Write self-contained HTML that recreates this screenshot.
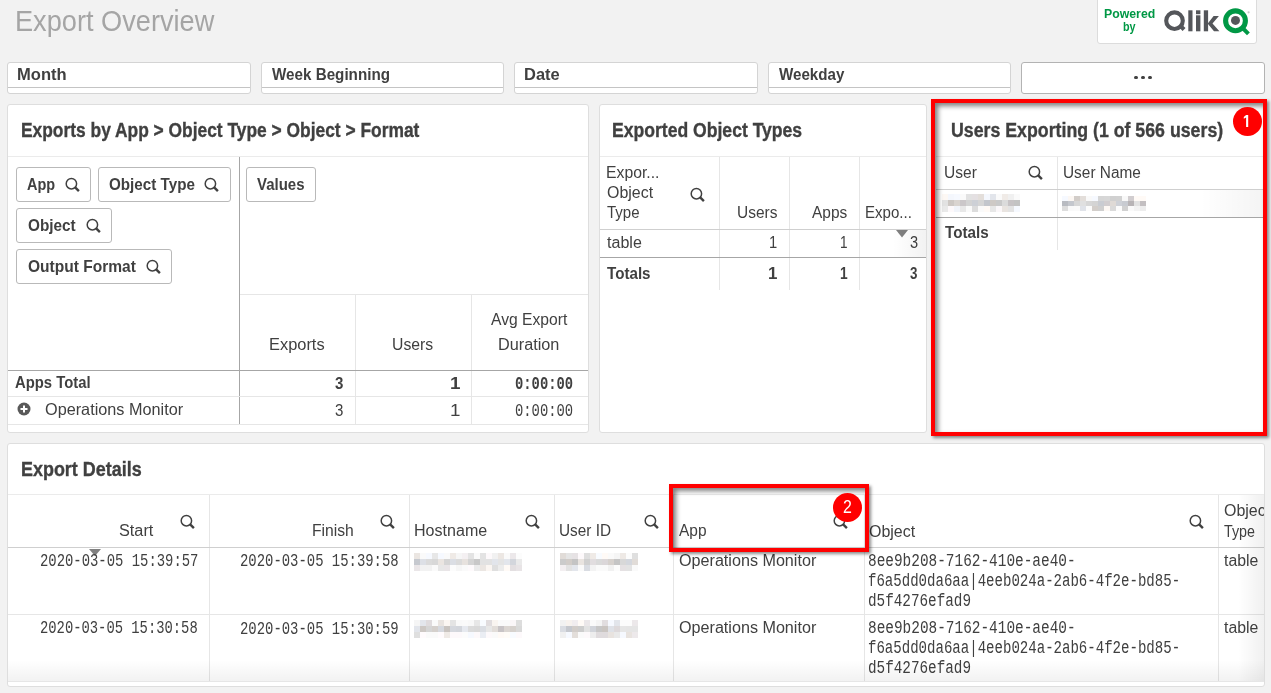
<!DOCTYPE html><html><head><meta charset="utf-8"><style>html,body{margin:0;padding:0}body{width:1271px;height:693px;position:relative;overflow:hidden;background:#f2f2f2;font-family:"Liberation Sans",sans-serif}</style></head><body>
<div style="position:absolute;left:14.73px;top:2px;font:400 29.07px/38px 'Liberation Sans';color:#a5a5a5;white-space:nowrap;transform-origin:left top;transform:scaleX(0.9350);">Export Overview</div>
<div style="position:absolute;left:1097px;top:-4px;width:160px;height:48px;background:#fff;border:1px solid #dcdcdc;border-radius:3px;box-sizing:border-box"></div>
<div style="position:absolute;left:1104.00px;top:5px;font:700 13.52px/18px 'Liberation Sans';color:#009845;white-space:nowrap;transform-origin:left top;transform:scaleX(0.9095);">Powered</div>
<div style="position:absolute;left:1123.00px;top:18px;font:700 13.52px/18px 'Liberation Sans';color:#009845;white-space:nowrap;transform-origin:left top;transform:scaleX(0.7997);">by</div>
<svg style="position:absolute;left:1160px;top:0px" width="100" height="40" viewBox="1160 0 100 40"><circle cx="1174.5" cy="20.7" r="8.3" fill="none" stroke="#54565a" stroke-width="4.1"/><path d="M1178.2 26.6l2.9-2.9 4.4 4.4-2.9 2.9z" fill="#54565a"/><rect x="1188.3" y="10.3" width="4.2" height="21" fill="#54565a"/><rect x="1196" y="10.3" width="4.4" height="3.9" fill="#54565a"/><rect x="1196" y="15.3" width="4.4" height="16" fill="#54565a"/><rect x="1203.8" y="10.3" width="4.3" height="21" fill="#54565a"/><path d="M1208 23.2l5.6-7.2h5.3l-6.4 7.4 6.9 7.9h-5.4l-6-7.2z" fill="#54565a"/><circle cx="1235.5" cy="20.8" r="9.9" fill="none" stroke="#009845" stroke-width="5.1"/><circle cx="1235.5" cy="20.4" r="4.5" fill="#54565a"/><path d="M1241.2 29.4l2.8-2.8 5.8 5.8-2.8 2.8z" fill="#009845"/><circle cx="1248.6" cy="12.3" r="1.1" fill="#c8c8c8"/></svg>
<div style="position:absolute;left:7px;top:62px;width:244px;height:32px;background:#fff;border:1px solid #d4d4d4;border-radius:3px;box-sizing:border-box"></div>
<div style="position:absolute;left:8px;top:87px;width:242px;height:1px;background:#c4c4c4"></div>
<div style="position:absolute;left:17.01px;top:64px;font:700 16.72px/22px 'Liberation Sans';color:#404040;white-space:nowrap;transform-origin:left top;transform:scaleX(0.9901);">Month</div>
<div style="position:absolute;left:261px;top:62px;width:243px;height:32px;background:#fff;border:1px solid #d4d4d4;border-radius:3px;box-sizing:border-box"></div>
<div style="position:absolute;left:262px;top:87px;width:241px;height:1px;background:#c4c4c4"></div>
<div style="position:absolute;left:272.00px;top:64px;font:700 16.72px/22px 'Liberation Sans';color:#404040;white-space:nowrap;transform-origin:left top;transform:scaleX(0.9102);">Week Beginning</div>
<div style="position:absolute;left:514px;top:62px;width:244px;height:32px;background:#fff;border:1px solid #d4d4d4;border-radius:3px;box-sizing:border-box"></div>
<div style="position:absolute;left:515px;top:87px;width:242px;height:1px;background:#c4c4c4"></div>
<div style="position:absolute;left:524.01px;top:64px;font:700 16.72px/22px 'Liberation Sans';color:#404040;white-space:nowrap;transform-origin:left top;transform:scaleX(0.9853);">Date</div>
<div style="position:absolute;left:768px;top:62px;width:243px;height:32px;background:#fff;border:1px solid #d4d4d4;border-radius:3px;box-sizing:border-box"></div>
<div style="position:absolute;left:769px;top:87px;width:241px;height:1px;background:#c4c4c4"></div>
<div style="position:absolute;left:779.00px;top:64px;font:700 16.72px/22px 'Liberation Sans';color:#404040;white-space:nowrap;transform-origin:left top;transform:scaleX(0.9063);">Weekday</div>
<div style="position:absolute;left:1021px;top:62px;width:244px;height:32px;background:#fff;border:1px solid #b3b3b3;border-radius:3px;box-sizing:border-box"></div>
<div style="position:absolute;left:1134.2px;top:75.9px;width:3.6px;height:3.6px;background:#404040;border-radius:50%"></div>
<div style="position:absolute;left:1141.2px;top:75.9px;width:3.6px;height:3.6px;background:#404040;border-radius:50%"></div>
<div style="position:absolute;left:1148.2px;top:75.9px;width:3.6px;height:3.6px;background:#404040;border-radius:50%"></div>
<div style="position:absolute;left:7px;top:104px;width:582px;height:329px;background:#fff;border:1px solid #dedede;border-radius:3px;box-sizing:border-box;"></div>
<div style="position:absolute;left:599px;top:104px;width:328px;height:329px;background:#fff;border:1px solid #dedede;border-radius:3px;box-sizing:border-box;"></div>
<div style="position:absolute;left:7px;top:443px;width:1258px;height:244px;background:#fff;border:1px solid #dedede;border-radius:3px;box-sizing:border-box;"></div>
<div style="position:absolute;left:20.85px;top:117px;font:700 20.35px/27px 'Liberation Sans';color:#404040;white-space:nowrap;transform-origin:left top;transform:scaleX(0.8542);-webkit-text-stroke:0.35px #404040">Exports by App &gt; Object Type &gt; Object &gt; Format</div>
<div style="position:absolute;left:8px;top:156px;width:580px;height:1px;background:#ebebeb"></div>
<div style="position:absolute;left:239px;top:157px;width:1px;height:268px;background:#a6a6a6"></div>
<div style="position:absolute;left:240px;top:294px;width:348px;height:1px;background:#e6e6e6"></div>
<div style="position:absolute;left:355px;top:295px;width:1px;height:130px;background:#e6e6e6"></div>
<div style="position:absolute;left:471px;top:295px;width:1px;height:130px;background:#e6e6e6"></div>
<div style="position:absolute;left:8px;top:370px;width:580px;height:1px;background:#a6a6a6"></div>
<div style="position:absolute;left:8px;top:396px;width:580px;height:1px;background:#e6e6e6"></div>
<div style="position:absolute;left:8px;top:424px;width:580px;height:1px;background:#e6e6e6"></div>
<div style="position:absolute;left:16px;top:167px;width:75px;height:35px;border:1px solid #b9b9b9;border-radius:3px;box-sizing:border-box"></div>
<div style="position:absolute;left:27.30px;top:173px;font:700 17.15px/23px 'Liberation Sans';color:#404040;white-space:nowrap;transform-origin:left top;transform:scaleX(0.8433);">App</div>
<svg style="position:absolute;left:64px;top:175.5px" width="17" height="17" viewBox="0 0 17 17"><circle cx="7.4" cy="7.7" r="5.2" fill="none" stroke="#404040" stroke-width="1.5"/><line x1="10.9" y1="11.2" x2="14.9" y2="15.2" stroke="#404040" stroke-width="2.4"/></svg>
<div style="position:absolute;left:98px;top:167px;width:133px;height:35px;border:1px solid #b9b9b9;border-radius:3px;box-sizing:border-box"></div>
<div style="position:absolute;left:109.40px;top:173px;font:700 17.15px/23px 'Liberation Sans';color:#404040;white-space:nowrap;transform-origin:left top;transform:scaleX(0.8868);">Object Type</div>
<svg style="position:absolute;left:203px;top:175.5px" width="17" height="17" viewBox="0 0 17 17"><circle cx="7.4" cy="7.7" r="5.2" fill="none" stroke="#404040" stroke-width="1.5"/><line x1="10.9" y1="11.2" x2="14.9" y2="15.2" stroke="#404040" stroke-width="2.4"/></svg>
<div style="position:absolute;left:16px;top:208px;width:96px;height:35px;border:1px solid #b9b9b9;border-radius:3px;box-sizing:border-box"></div>
<div style="position:absolute;left:27.80px;top:214px;font:700 17.15px/23px 'Liberation Sans';color:#404040;white-space:nowrap;transform-origin:left top;transform:scaleX(0.8931);">Object</div>
<svg style="position:absolute;left:84.5px;top:216.5px" width="17" height="17" viewBox="0 0 17 17"><circle cx="7.4" cy="7.7" r="5.2" fill="none" stroke="#404040" stroke-width="1.5"/><line x1="10.9" y1="11.2" x2="14.9" y2="15.2" stroke="#404040" stroke-width="2.4"/></svg>
<div style="position:absolute;left:16px;top:249px;width:156px;height:35px;border:1px solid #b9b9b9;border-radius:3px;box-sizing:border-box"></div>
<div style="position:absolute;left:27.80px;top:255px;font:700 17.15px/23px 'Liberation Sans';color:#404040;white-space:nowrap;transform-origin:left top;transform:scaleX(0.9069);">Output Format</div>
<svg style="position:absolute;left:145px;top:257.5px" width="17" height="17" viewBox="0 0 17 17"><circle cx="7.4" cy="7.7" r="5.2" fill="none" stroke="#404040" stroke-width="1.5"/><line x1="10.9" y1="11.2" x2="14.9" y2="15.2" stroke="#404040" stroke-width="2.4"/></svg>
<div style="position:absolute;left:246px;top:167px;width:70px;height:35px;border:1px solid #b9b9b9;border-radius:3px;box-sizing:border-box"></div>
<div style="position:absolute;left:257.00px;top:173px;font:700 17.15px/23px 'Liberation Sans';color:#404040;white-space:nowrap;transform-origin:left top;transform:scaleX(0.8739);">Values</div>
<div style="position:absolute;left:269.20px;top:333px;font:400 16.42px/22px 'Liberation Sans';color:#404040;white-space:nowrap;transform-origin:left top;transform:scaleX(0.9997);">Exports</div>
<div style="position:absolute;left:392.04px;top:333px;font:400 16.42px/22px 'Liberation Sans';color:#404040;white-space:nowrap;transform-origin:left top;transform:scaleX(0.9606);">Users</div>
<div style="position:absolute;left:491.00px;top:308px;font:400 16.42px/22px 'Liberation Sans';color:#404040;white-space:nowrap;transform-origin:left top;transform:scaleX(0.9541);">Avg Export</div>
<div style="position:absolute;left:497.71px;top:333px;font:400 16.42px/22px 'Liberation Sans';color:#404040;white-space:nowrap;transform-origin:left top;transform:scaleX(0.9903);">Duration</div>
<div style="position:absolute;left:15.00px;top:372px;font:700 16.72px/22px 'Liberation Sans';color:#404040;white-space:nowrap;transform-origin:left top;transform:scaleX(0.8885);">Apps Total</div>
<div style="position:absolute;left:335.40px;top:373px;font:700 16.72px/22px 'Liberation Sans';color:#404040;white-space:nowrap;transform-origin:left top;transform:scaleX(0.9000);">3</div>
<div style="position:absolute;left:449.88px;top:373px;font:700 16.72px/22px 'Liberation Sans';color:#404040;white-space:nowrap;transform-origin:left top;transform:scaleX(1.1250);">1</div>
<div style="position:absolute;left:515.21px;top:373px;font:700 17.46px/23px 'Liberation Mono';color:#404040;white-space:nowrap;transform-origin:left top;transform:scaleX(0.7940);">0:00:00</div>
<svg style="position:absolute;left:17px;top:402px" width="14" height="14" viewBox="0 0 14 14"><circle cx="7" cy="7" r="6.5" fill="#595959"/><path d="M7 3.5v7M3.5 7h7" stroke="#fff" stroke-width="2"/></svg>
<div style="position:absolute;left:45.00px;top:399px;font:400 16.72px/22px 'Liberation Sans';color:#404040;white-space:nowrap;transform-origin:left top;transform:scaleX(0.9721);">Operations Monitor</div>
<div style="position:absolute;left:335.40px;top:400px;font:400 16.72px/22px 'Liberation Sans';color:#404040;white-space:nowrap;transform-origin:left top;transform:scaleX(0.9000);">3</div>
<div style="position:absolute;left:449.88px;top:400px;font:400 16.72px/22px 'Liberation Sans';color:#404040;white-space:nowrap;transform-origin:left top;transform:scaleX(1.1250);">1</div>
<div style="position:absolute;left:515.21px;top:400px;font:400 17.46px/23px 'Liberation Mono';color:#404040;white-space:nowrap;transform-origin:left top;transform:scaleX(0.7940);">0:00:00</div>
<div style="position:absolute;left:612.14px;top:117px;font:700 20.35px/27px 'Liberation Sans';color:#404040;white-space:nowrap;transform-origin:left top;transform:scaleX(0.8640);-webkit-text-stroke:0.35px #404040">Exported Object Types</div>
<div style="position:absolute;left:600px;top:156px;width:326px;height:1px;background:#ebebeb"></div>
<div style="position:absolute;left:719px;top:157px;width:1px;height:133px;background:#e6e6e6"></div>
<div style="position:absolute;left:789px;top:157px;width:1px;height:133px;background:#e6e6e6"></div>
<div style="position:absolute;left:859px;top:157px;width:1px;height:133px;background:#e6e6e6"></div>
<div style="position:absolute;left:600px;top:229px;width:326px;height:1px;background:#cfcfcf"></div>
<div style="position:absolute;left:600px;top:257px;width:326px;height:1px;background:#a6a6a6"></div>
<div style="position:absolute;left:606.04px;top:161px;font:400 16.42px/22px 'Liberation Sans';color:#404040;white-space:nowrap;transform-origin:left top;transform:scaleX(0.9599);">Expor...</div>
<div style="position:absolute;left:607.00px;top:181px;font:400 16.42px/22px 'Liberation Sans';color:#404040;white-space:nowrap;transform-origin:left top;transform:scaleX(0.9716);">Object</div>
<div style="position:absolute;left:607.00px;top:201px;font:400 16.42px/22px 'Liberation Sans';color:#404040;white-space:nowrap;transform-origin:left top;transform:scaleX(0.9141);">Type</div>
<svg style="position:absolute;left:688.5px;top:186px" width="17" height="17" viewBox="0 0 17 17"><circle cx="7.4" cy="7.7" r="5.2" fill="none" stroke="#404040" stroke-width="1.5"/><line x1="10.9" y1="11.2" x2="14.9" y2="15.2" stroke="#404040" stroke-width="2.4"/></svg>
<div style="position:absolute;left:736.76px;top:201px;font:400 16.42px/22px 'Liberation Sans';color:#404040;white-space:nowrap;transform-origin:left top;transform:scaleX(0.9438);">Users</div>
<div style="position:absolute;left:812.00px;top:201px;font:400 16.42px/22px 'Liberation Sans';color:#404040;white-space:nowrap;transform-origin:left top;transform:scaleX(0.9411);">Apps</div>
<div style="position:absolute;left:865.08px;top:201px;font:400 16.42px/22px 'Liberation Sans';color:#404040;white-space:nowrap;transform-origin:left top;transform:scaleX(0.9170);">Expo...</div>
<svg style="position:absolute;left:895px;top:230px" width="14" height="8" viewBox="0 0 14 8"><path d="M1 0h12l-6 7.6z" fill="#808080"/></svg>
<div style="position:absolute;left:606.70px;top:231px;font:400 16.42px/22px 'Liberation Sans';color:#404040;white-space:nowrap;transform-origin:left top;transform:scaleX(0.9788);">table</div>
<div style="position:absolute;left:769.40px;top:231px;font:400 16.42px/22px 'Liberation Sans';color:#404040;white-space:nowrap;transform-origin:left top;transform:scaleX(0.9000);">1</div>
<div style="position:absolute;left:840.17px;top:231px;font:400 16.42px/22px 'Liberation Sans';color:#404040;white-space:nowrap;transform-origin:left top;transform:scaleX(0.8250);">1</div>
<div style="position:absolute;left:910.00px;top:231px;font:400 16.42px/22px 'Liberation Sans';color:#404040;white-space:nowrap;transform-origin:left top;transform:scaleX(0.8889);">3</div>
<div style="position:absolute;left:606.70px;top:263px;font:700 16.72px/22px 'Liberation Sans';color:#404040;white-space:nowrap;transform-origin:left top;transform:scaleX(0.9086);">Totals</div>
<div style="position:absolute;left:767.89px;top:263px;font:700 16.72px/22px 'Liberation Sans';color:#404040;white-space:nowrap;transform-origin:left top;transform:scaleX(1.0125);">1</div>
<div style="position:absolute;left:840.17px;top:263px;font:700 16.72px/22px 'Liberation Sans';color:#404040;white-space:nowrap;transform-origin:left top;transform:scaleX(0.8250);">1</div>
<div style="position:absolute;left:909.70px;top:263px;font:700 16.72px/22px 'Liberation Sans';color:#404040;white-space:nowrap;transform-origin:left top;transform:scaleX(0.8000);">3</div>
<div style="position:absolute;left:935px;top:103px;width:328px;height:329px;background:#fff"></div>
<div style="position:absolute;left:950.53px;top:117px;font:700 20.35px/27px 'Liberation Sans';color:#404040;white-space:nowrap;transform-origin:left top;transform:scaleX(0.8722);-webkit-text-stroke:0.35px #404040">Users Exporting (1 of 566 users)</div>
<div style="position:absolute;left:936px;top:156px;width:327px;height:1px;background:#ebebeb"></div>
<div style="position:absolute;left:943.55px;top:161px;font:400 16.42px/22px 'Liberation Sans';color:#404040;white-space:nowrap;transform-origin:left top;transform:scaleX(0.9480);">User</div>
<svg style="position:absolute;left:1027px;top:164px" width="17" height="17" viewBox="0 0 17 17"><circle cx="7.4" cy="7.7" r="5.2" fill="none" stroke="#404040" stroke-width="1.5"/><line x1="10.9" y1="11.2" x2="14.9" y2="15.2" stroke="#404040" stroke-width="2.4"/></svg>
<div style="position:absolute;left:1062.76px;top:161px;font:400 16.42px/22px 'Liberation Sans';color:#404040;white-space:nowrap;transform-origin:left top;transform:scaleX(0.9385);">User Name</div>
<div style="position:absolute;left:1057px;top:157px;width:1px;height:93px;background:#e6e6e6"></div>
<div style="position:absolute;left:936px;top:189px;width:327px;height:1px;background:#cfcfcf"></div>
<div style="position:absolute;left:936px;top:217px;width:327px;height:1px;background:#a6a6a6"></div>
<div style="position:absolute;left:944.50px;top:222px;font:700 16.72px/22px 'Liberation Sans';color:#404040;white-space:nowrap;transform-origin:left top;transform:scaleX(0.9107);">Totals</div>
<svg style="position:absolute;left:942px;top:194px;filter:blur(0.7px)" width="78" height="18" shape-rendering="crispEdges"><rect x="0" y="0" width="6" height="6" fill="rgb(253, 248, 244)"/><rect x="6" y="0" width="6" height="6" fill="rgb(244, 247, 253)"/><rect x="12" y="0" width="6" height="6" fill="rgb(246, 249, 255)"/><rect x="18" y="0" width="6" height="6" fill="rgb(250, 250, 250)"/><rect x="24" y="0" width="6" height="6" fill="rgb(226, 226, 226)"/><rect x="30" y="0" width="6" height="6" fill="rgb(228, 224, 226)"/><rect x="36" y="0" width="6" height="6" fill="rgb(227, 222, 218)"/><rect x="42" y="0" width="6" height="6" fill="rgb(244, 247, 253)"/><rect x="48" y="0" width="6" height="6" fill="rgb(226, 229, 235)"/><rect x="54" y="0" width="6" height="6" fill="rgb(250, 250, 250)"/><rect x="60" y="0" width="6" height="6" fill="rgb(240, 235, 231)"/><rect x="66" y="0" width="6" height="6" fill="rgb(240, 240, 240)"/><rect x="72" y="0" width="6" height="6" fill="rgb(250, 250, 250)"/><rect x="0" y="6" width="6" height="6" fill="rgb(226, 226, 226)"/><rect x="6" y="6" width="6" height="6" fill="rgb(205, 200, 196)"/><rect x="12" y="6" width="6" height="6" fill="rgb(217, 212, 208)"/><rect x="18" y="6" width="6" height="6" fill="rgb(203, 199, 201)"/><rect x="24" y="6" width="6" height="6" fill="rgb(211, 211, 211)"/><rect x="30" y="6" width="6" height="6" fill="rgb(205, 208, 214)"/><rect x="36" y="6" width="6" height="6" fill="rgb(213, 213, 213)"/><rect x="42" y="6" width="6" height="6" fill="rgb(195, 198, 204)"/><rect x="48" y="6" width="6" height="6" fill="rgb(206, 201, 197)"/><rect x="54" y="6" width="6" height="6" fill="rgb(201, 201, 201)"/><rect x="60" y="6" width="6" height="6" fill="rgb(219, 219, 219)"/><rect x="66" y="6" width="6" height="6" fill="rgb(199, 195, 197)"/><rect x="72" y="6" width="6" height="6" fill="rgb(195, 195, 195)"/><rect x="0" y="12" width="6" height="6" fill="rgb(233, 233, 233)"/><rect x="6" y="12" width="6" height="6" fill="rgb(253, 249, 251)"/><rect x="12" y="12" width="6" height="6" fill="rgb(241, 244, 250)"/><rect x="18" y="12" width="6" height="6" fill="rgb(232, 232, 232)"/><rect x="24" y="12" width="6" height="6" fill="rgb(250, 250, 250)"/><rect x="30" y="12" width="6" height="6" fill="rgb(220, 220, 220)"/><rect x="36" y="12" width="6" height="6" fill="rgb(250, 250, 250)"/><rect x="42" y="12" width="6" height="6" fill="rgb(255, 250, 246)"/><rect x="48" y="12" width="6" height="6" fill="rgb(231, 231, 231)"/><rect x="54" y="12" width="6" height="6" fill="rgb(251, 247, 249)"/><rect x="60" y="12" width="6" height="6" fill="rgb(233, 228, 224)"/><rect x="66" y="12" width="6" height="6" fill="rgb(227, 227, 227)"/><rect x="72" y="12" width="6" height="6" fill="rgb(246, 249, 255)"/></svg>
<svg style="position:absolute;left:1062px;top:196px;filter:blur(0.7px)" width="84" height="15" shape-rendering="crispEdges"><rect x="0" y="0" width="6" height="5" fill="rgb(246, 249, 255)"/><rect x="6" y="0" width="6" height="5" fill="rgb(252, 247, 243)"/><rect x="12" y="0" width="6" height="5" fill="rgb(210, 205, 201)"/><rect x="18" y="0" width="6" height="5" fill="rgb(227, 222, 218)"/><rect x="24" y="0" width="6" height="5" fill="rgb(249, 249, 249)"/><rect x="30" y="0" width="6" height="5" fill="rgb(246, 249, 255)"/><rect x="36" y="0" width="6" height="5" fill="rgb(214, 214, 214)"/><rect x="42" y="0" width="6" height="5" fill="rgb(215, 215, 215)"/><rect x="48" y="0" width="6" height="5" fill="rgb(208, 208, 208)"/><rect x="54" y="0" width="6" height="5" fill="rgb(209, 209, 209)"/><rect x="60" y="0" width="6" height="5" fill="rgb(248, 248, 248)"/><rect x="66" y="0" width="6" height="5" fill="rgb(209, 205, 207)"/><rect x="72" y="0" width="6" height="5" fill="rgb(255, 250, 246)"/><rect x="78" y="0" width="6" height="5" fill="rgb(255, 250, 246)"/><rect x="0" y="5" width="6" height="5" fill="rgb(184, 187, 193)"/><rect x="6" y="5" width="6" height="5" fill="rgb(196, 199, 205)"/><rect x="12" y="5" width="6" height="5" fill="rgb(215, 215, 215)"/><rect x="18" y="5" width="6" height="5" fill="rgb(224, 224, 224)"/><rect x="24" y="5" width="6" height="5" fill="rgb(215, 215, 215)"/><rect x="30" y="5" width="6" height="5" fill="rgb(212, 212, 212)"/><rect x="36" y="5" width="6" height="5" fill="rgb(201, 204, 210)"/><rect x="42" y="5" width="6" height="5" fill="rgb(209, 205, 207)"/><rect x="48" y="5" width="6" height="5" fill="rgb(223, 218, 214)"/><rect x="54" y="5" width="6" height="5" fill="rgb(206, 209, 215)"/><rect x="60" y="5" width="6" height="5" fill="rgb(200, 203, 209)"/><rect x="66" y="5" width="6" height="5" fill="rgb(184, 180, 182)"/><rect x="72" y="5" width="6" height="5" fill="rgb(226, 226, 226)"/><rect x="78" y="5" width="6" height="5" fill="rgb(195, 191, 193)"/><rect x="0" y="10" width="6" height="5" fill="rgb(221, 221, 221)"/><rect x="6" y="10" width="6" height="5" fill="rgb(249, 249, 249)"/><rect x="12" y="10" width="6" height="5" fill="rgb(250, 250, 250)"/><rect x="18" y="10" width="6" height="5" fill="rgb(224, 227, 233)"/><rect x="24" y="10" width="6" height="5" fill="rgb(252, 252, 252)"/><rect x="30" y="10" width="6" height="5" fill="rgb(211, 206, 202)"/><rect x="36" y="10" width="6" height="5" fill="rgb(207, 207, 207)"/><rect x="42" y="10" width="6" height="5" fill="rgb(253, 248, 244)"/><rect x="48" y="10" width="6" height="5" fill="rgb(218, 218, 218)"/><rect x="54" y="10" width="6" height="5" fill="rgb(252, 252, 252)"/><rect x="60" y="10" width="6" height="5" fill="rgb(209, 209, 209)"/><rect x="66" y="10" width="6" height="5" fill="rgb(250, 250, 250)"/><rect x="72" y="10" width="6" height="5" fill="rgb(243, 243, 243)"/><rect x="78" y="10" width="6" height="5" fill="rgb(237, 237, 237)"/></svg>
<div style="position:absolute;left:931px;top:99px;width:336px;height:337px;border:4px solid #ff0000;box-sizing:border-box;box-shadow:inset 3px 3px 5px rgba(0,0,0,.5),2px 2px 3px rgba(0,0,0,.45)"></div>
<div style="position:absolute;left:1233px;top:107px;width:29px;height:29px;border-radius:50%;background:#f00"></div>
<svg style="position:absolute;left:1240px;top:112px" width="12" height="18" viewBox="1240 112 12 18"><path d="M1246.1 115h2.1v12h-2.1v-9.4l-2.3 1.2v-1.9z" fill="#fff"/></svg>
<div style="position:absolute;left:20.82px;top:456px;font:700 20.35px/27px 'Liberation Sans';color:#404040;white-space:nowrap;transform-origin:left top;transform:scaleX(0.8821);-webkit-text-stroke:0.35px #404040">Export Details</div>
<div style="position:absolute;left:8px;top:494px;width:1256px;height:1px;background:#ebebeb"></div>
<div style="position:absolute;left:209px;top:495px;width:1px;height:186px;background:#e6e6e6"></div>
<div style="position:absolute;left:409px;top:495px;width:1px;height:186px;background:#e6e6e6"></div>
<div style="position:absolute;left:554px;top:495px;width:1px;height:186px;background:#e6e6e6"></div>
<div style="position:absolute;left:673px;top:495px;width:1px;height:186px;background:#e6e6e6"></div>
<div style="position:absolute;left:864px;top:495px;width:1px;height:186px;background:#e6e6e6"></div>
<div style="position:absolute;left:1218px;top:495px;width:1px;height:186px;background:#e6e6e6"></div>
<div style="position:absolute;left:8px;top:547px;width:1256px;height:1px;background:#cfcfcf"></div>
<div style="position:absolute;left:8px;top:614px;width:1256px;height:1px;background:#e6e6e6"></div>
<div style="position:absolute;left:8px;top:681px;width:1256px;height:1px;background:#e6e6e6"></div>
<div style="position:absolute;left:119.00px;top:519px;font:400 16.42px/22px 'Liberation Sans';color:#404040;white-space:nowrap;transform-origin:left top;transform:scaleX(0.9918);">Start</div>
<svg style="position:absolute;left:178.5px;top:513px" width="17" height="17" viewBox="0 0 17 17"><circle cx="7.4" cy="7.7" r="5.2" fill="none" stroke="#404040" stroke-width="1.5"/><line x1="10.9" y1="11.2" x2="14.9" y2="15.2" stroke="#404040" stroke-width="2.4"/></svg>
<div style="position:absolute;left:311.55px;top:519px;font:400 16.42px/22px 'Liberation Sans';color:#404040;white-space:nowrap;transform-origin:left top;transform:scaleX(0.9545);">Finish</div>
<svg style="position:absolute;left:379px;top:513px" width="17" height="17" viewBox="0 0 17 17"><circle cx="7.4" cy="7.7" r="5.2" fill="none" stroke="#404040" stroke-width="1.5"/><line x1="10.9" y1="11.2" x2="14.9" y2="15.2" stroke="#404040" stroke-width="2.4"/></svg>
<div style="position:absolute;left:414.22px;top:519px;font:400 16.42px/22px 'Liberation Sans';color:#404040;white-space:nowrap;transform-origin:left top;transform:scaleX(0.9790);">Hostname</div>
<svg style="position:absolute;left:524px;top:513px" width="17" height="17" viewBox="0 0 17 17"><circle cx="7.4" cy="7.7" r="5.2" fill="none" stroke="#404040" stroke-width="1.5"/><line x1="10.9" y1="11.2" x2="14.9" y2="15.2" stroke="#404040" stroke-width="2.4"/></svg>
<div style="position:absolute;left:559.36px;top:519px;font:400 16.42px/22px 'Liberation Sans';color:#404040;white-space:nowrap;transform-origin:left top;transform:scaleX(0.9351);">User ID</div>
<svg style="position:absolute;left:643px;top:513px" width="17" height="17" viewBox="0 0 17 17"><circle cx="7.4" cy="7.7" r="5.2" fill="none" stroke="#404040" stroke-width="1.5"/><line x1="10.9" y1="11.2" x2="14.9" y2="15.2" stroke="#404040" stroke-width="2.4"/></svg>
<div style="position:absolute;left:678.90px;top:519px;font:400 16.42px/22px 'Liberation Sans';color:#404040;white-space:nowrap;transform-origin:left top;transform:scaleX(0.9426);">App</div>
<svg style="position:absolute;left:832px;top:513px" width="17" height="17" viewBox="0 0 17 17"><circle cx="7.4" cy="7.7" r="5.2" fill="none" stroke="#404040" stroke-width="1.5"/><line x1="10.9" y1="11.2" x2="14.9" y2="15.2" stroke="#404040" stroke-width="2.4"/></svg>
<div style="position:absolute;left:869.00px;top:520px;font:400 16.42px/22px 'Liberation Sans';color:#404040;white-space:nowrap;transform-origin:left top;transform:scaleX(0.9737);">Object</div>
<svg style="position:absolute;left:1188px;top:512.5px" width="17" height="17" viewBox="0 0 17 17"><circle cx="7.4" cy="7.7" r="5.2" fill="none" stroke="#404040" stroke-width="1.5"/><line x1="10.9" y1="11.2" x2="14.9" y2="15.2" stroke="#404040" stroke-width="2.4"/></svg>
<div style="position:absolute;left:0;top:0;width:1264px;height:693px;overflow:hidden">
<div style="position:absolute;left:1224.20px;top:499px;font:400 16.42px/22px 'Liberation Sans';color:#404040;white-space:nowrap;transform-origin:left top;transform:scaleX(0.9737);">Object</div>
<div style="position:absolute;left:1224.20px;top:520px;font:400 16.42px/22px 'Liberation Sans';color:#404040;white-space:nowrap;transform-origin:left top;transform:scaleX(0.8690);">Type</div>
</div>
<svg style="position:absolute;left:88px;top:549px" width="14" height="8" viewBox="0 0 14 8"><path d="M1 0h12l-6 7z" fill="#808080"/></svg>
<div style="position:absolute;left:39.87px;top:549px;font:400 18.98px/25px 'Liberation Mono';color:#404040;white-space:nowrap;transform-origin:left top;transform:scaleX(0.7326);">2020-03-05 15:39:57</div>
<div style="position:absolute;left:239.67px;top:549px;font:400 18.98px/25px 'Liberation Mono';color:#404040;white-space:nowrap;transform-origin:left top;transform:scaleX(0.7334);">2020-03-05 15:39:58</div>
<div style="position:absolute;left:678.90px;top:549px;font:400 16.42px/22px 'Liberation Sans';color:#404040;white-space:nowrap;transform-origin:left top;transform:scaleX(0.9839);">Operations Monitor</div>
<div style="position:absolute;left:868.24px;top:549px;font:400 18.98px/25px 'Liberation Mono';color:#404040;white-space:nowrap;transform-origin:left top;transform:scaleX(0.7598);">8ee9b208-7162-410e-ae40-</div>
<div style="position:absolute;left:868.26px;top:569px;font:400 18.98px/25px 'Liberation Mono';color:#404040;white-space:nowrap;transform-origin:left top;transform:scaleX(0.7410);">f6a5dd0da6aa|4eeb024a-2ab6-4f2e-bd85-</div>
<div style="position:absolute;left:868.25px;top:589px;font:400 18.98px/25px 'Liberation Mono';color:#404040;white-space:nowrap;transform-origin:left top;transform:scaleX(0.7544);">d5f4276efad9</div>
<div style="position:absolute;left:1224.20px;top:549px;font:400 16.42px/22px 'Liberation Sans';color:#404040;white-space:nowrap;transform-origin:left top;transform:scaleX(0.9647);">table</div>
<svg style="position:absolute;left:414px;top:553px;filter:blur(0.7px)" width="108" height="18" shape-rendering="crispEdges"><rect x="0" y="0" width="6" height="6" fill="rgb(235, 230, 226)"/><rect x="6" y="0" width="6" height="6" fill="rgb(250, 250, 250)"/><rect x="12" y="0" width="6" height="6" fill="rgb(246, 249, 255)"/><rect x="18" y="0" width="6" height="6" fill="rgb(231, 231, 231)"/><rect x="24" y="0" width="6" height="6" fill="rgb(246, 249, 255)"/><rect x="30" y="0" width="6" height="6" fill="rgb(250, 250, 250)"/><rect x="36" y="0" width="6" height="6" fill="rgb(239, 234, 230)"/><rect x="42" y="0" width="6" height="6" fill="rgb(246, 246, 246)"/><rect x="48" y="0" width="6" height="6" fill="rgb(244, 240, 242)"/><rect x="54" y="0" width="6" height="6" fill="rgb(227, 227, 227)"/><rect x="60" y="0" width="6" height="6" fill="rgb(250, 250, 250)"/><rect x="66" y="0" width="6" height="6" fill="rgb(227, 227, 227)"/><rect x="72" y="0" width="6" height="6" fill="rgb(253, 249, 251)"/><rect x="78" y="0" width="6" height="6" fill="rgb(241, 241, 241)"/><rect x="84" y="0" width="6" height="6" fill="rgb(236, 231, 227)"/><rect x="90" y="0" width="6" height="6" fill="rgb(250, 250, 250)"/><rect x="96" y="0" width="6" height="6" fill="rgb(236, 232, 234)"/><rect x="102" y="0" width="6" height="6" fill="rgb(252, 252, 252)"/><rect x="0" y="6" width="6" height="6" fill="rgb(198, 201, 207)"/><rect x="6" y="6" width="6" height="6" fill="rgb(221, 224, 230)"/><rect x="12" y="6" width="6" height="6" fill="rgb(219, 219, 219)"/><rect x="18" y="6" width="6" height="6" fill="rgb(216, 216, 216)"/><rect x="24" y="6" width="6" height="6" fill="rgb(234, 229, 225)"/><rect x="30" y="6" width="6" height="6" fill="rgb(213, 213, 213)"/><rect x="36" y="6" width="6" height="6" fill="rgb(219, 222, 228)"/><rect x="42" y="6" width="6" height="6" fill="rgb(219, 219, 219)"/><rect x="48" y="6" width="6" height="6" fill="rgb(231, 226, 222)"/><rect x="54" y="6" width="6" height="6" fill="rgb(212, 212, 212)"/><rect x="60" y="6" width="6" height="6" fill="rgb(200, 200, 200)"/><rect x="66" y="6" width="6" height="6" fill="rgb(226, 226, 226)"/><rect x="72" y="6" width="6" height="6" fill="rgb(226, 226, 226)"/><rect x="78" y="6" width="6" height="6" fill="rgb(226, 229, 235)"/><rect x="84" y="6" width="6" height="6" fill="rgb(228, 228, 228)"/><rect x="90" y="6" width="6" height="6" fill="rgb(227, 230, 236)"/><rect x="96" y="6" width="6" height="6" fill="rgb(211, 214, 220)"/><rect x="102" y="6" width="6" height="6" fill="rgb(234, 234, 234)"/><rect x="0" y="12" width="6" height="6" fill="rgb(234, 230, 232)"/><rect x="6" y="12" width="6" height="6" fill="rgb(242, 242, 242)"/><rect x="12" y="12" width="6" height="6" fill="rgb(242, 242, 242)"/><rect x="18" y="12" width="6" height="6" fill="rgb(250, 250, 250)"/><rect x="24" y="12" width="6" height="6" fill="rgb(231, 231, 231)"/><rect x="30" y="12" width="6" height="6" fill="rgb(233, 229, 231)"/><rect x="36" y="12" width="6" height="6" fill="rgb(252, 252, 252)"/><rect x="42" y="12" width="6" height="6" fill="rgb(246, 246, 246)"/><rect x="48" y="12" width="6" height="6" fill="rgb(250, 250, 250)"/><rect x="54" y="12" width="6" height="6" fill="rgb(254, 250, 252)"/><rect x="60" y="12" width="6" height="6" fill="rgb(235, 235, 235)"/><rect x="66" y="12" width="6" height="6" fill="rgb(235, 230, 226)"/><rect x="72" y="12" width="6" height="6" fill="rgb(251, 246, 242)"/><rect x="78" y="12" width="6" height="6" fill="rgb(223, 223, 223)"/><rect x="84" y="12" width="6" height="6" fill="rgb(236, 236, 236)"/><rect x="90" y="12" width="6" height="6" fill="rgb(255, 250, 246)"/><rect x="96" y="12" width="6" height="6" fill="rgb(227, 223, 225)"/><rect x="102" y="12" width="6" height="6" fill="rgb(232, 228, 230)"/></svg>
<svg style="position:absolute;left:560px;top:553px;filter:blur(0.7px)" width="78" height="18" shape-rendering="crispEdges"><rect x="0" y="0" width="6" height="6" fill="rgb(225, 220, 216)"/><rect x="6" y="0" width="6" height="6" fill="rgb(229, 229, 229)"/><rect x="12" y="0" width="6" height="6" fill="rgb(230, 226, 228)"/><rect x="18" y="0" width="6" height="6" fill="rgb(253, 249, 251)"/><rect x="24" y="0" width="6" height="6" fill="rgb(222, 222, 222)"/><rect x="30" y="0" width="6" height="6" fill="rgb(239, 234, 230)"/><rect x="36" y="0" width="6" height="6" fill="rgb(248, 251, 255)"/><rect x="42" y="0" width="6" height="6" fill="rgb(255, 250, 246)"/><rect x="48" y="0" width="6" height="6" fill="rgb(250, 250, 250)"/><rect x="54" y="0" width="6" height="6" fill="rgb(245, 245, 245)"/><rect x="60" y="0" width="6" height="6" fill="rgb(238, 233, 229)"/><rect x="66" y="0" width="6" height="6" fill="rgb(252, 252, 252)"/><rect x="72" y="0" width="6" height="6" fill="rgb(223, 223, 223)"/><rect x="0" y="6" width="6" height="6" fill="rgb(203, 203, 203)"/><rect x="6" y="6" width="6" height="6" fill="rgb(209, 204, 200)"/><rect x="12" y="6" width="6" height="6" fill="rgb(196, 196, 196)"/><rect x="18" y="6" width="6" height="6" fill="rgb(233, 228, 224)"/><rect x="24" y="6" width="6" height="6" fill="rgb(208, 208, 208)"/><rect x="30" y="6" width="6" height="6" fill="rgb(225, 221, 223)"/><rect x="36" y="6" width="6" height="6" fill="rgb(218, 218, 218)"/><rect x="42" y="6" width="6" height="6" fill="rgb(219, 215, 217)"/><rect x="48" y="6" width="6" height="6" fill="rgb(214, 209, 205)"/><rect x="54" y="6" width="6" height="6" fill="rgb(197, 197, 197)"/><rect x="60" y="6" width="6" height="6" fill="rgb(216, 216, 216)"/><rect x="66" y="6" width="6" height="6" fill="rgb(212, 215, 221)"/><rect x="72" y="6" width="6" height="6" fill="rgb(225, 220, 216)"/><rect x="0" y="12" width="6" height="6" fill="rgb(243, 239, 241)"/><rect x="6" y="12" width="6" height="6" fill="rgb(226, 226, 226)"/><rect x="12" y="12" width="6" height="6" fill="rgb(227, 230, 236)"/><rect x="18" y="12" width="6" height="6" fill="rgb(250, 250, 250)"/><rect x="24" y="12" width="6" height="6" fill="rgb(217, 220, 226)"/><rect x="30" y="12" width="6" height="6" fill="rgb(243, 243, 243)"/><rect x="36" y="12" width="6" height="6" fill="rgb(250, 250, 250)"/><rect x="42" y="12" width="6" height="6" fill="rgb(250, 250, 250)"/><rect x="48" y="12" width="6" height="6" fill="rgb(241, 241, 241)"/><rect x="54" y="12" width="6" height="6" fill="rgb(252, 252, 252)"/><rect x="60" y="12" width="6" height="6" fill="rgb(229, 225, 227)"/><rect x="66" y="12" width="6" height="6" fill="rgb(227, 227, 227)"/><rect x="72" y="12" width="6" height="6" fill="rgb(250, 250, 250)"/></svg>
<div style="position:absolute;left:39.87px;top:616px;font:400 18.98px/25px 'Liberation Mono';color:#404040;white-space:nowrap;transform-origin:left top;transform:scaleX(0.7292);">2020-03-05 15:30:58</div>
<div style="position:absolute;left:239.67px;top:617px;font:400 18.98px/25px 'Liberation Mono';color:#404040;white-space:nowrap;transform-origin:left top;transform:scaleX(0.7334);">2020-03-05 15:30:59</div>
<div style="position:absolute;left:678.90px;top:616px;font:400 16.42px/22px 'Liberation Sans';color:#404040;white-space:nowrap;transform-origin:left top;transform:scaleX(0.9839);">Operations Monitor</div>
<div style="position:absolute;left:868.24px;top:616px;font:400 18.98px/25px 'Liberation Mono';color:#404040;white-space:nowrap;transform-origin:left top;transform:scaleX(0.7598);">8ee9b208-7162-410e-ae40-</div>
<div style="position:absolute;left:868.26px;top:636px;font:400 18.98px/25px 'Liberation Mono';color:#404040;white-space:nowrap;transform-origin:left top;transform:scaleX(0.7410);">f6a5dd0da6aa|4eeb024a-2ab6-4f2e-bd85-</div>
<div style="position:absolute;left:868.25px;top:656px;font:400 18.98px/25px 'Liberation Mono';color:#404040;white-space:nowrap;transform-origin:left top;transform:scaleX(0.7544);">d5f4276efad9</div>
<div style="position:absolute;left:1224.20px;top:616px;font:400 16.42px/22px 'Liberation Sans';color:#404040;white-space:nowrap;transform-origin:left top;transform:scaleX(0.9647);">table</div>
<svg style="position:absolute;left:414px;top:620px;filter:blur(0.7px)" width="108" height="18" shape-rendering="crispEdges"><rect x="0" y="0" width="6" height="6" fill="rgb(245, 245, 245)"/><rect x="6" y="0" width="6" height="6" fill="rgb(227, 230, 236)"/><rect x="12" y="0" width="6" height="6" fill="rgb(223, 219, 221)"/><rect x="18" y="0" width="6" height="6" fill="rgb(250, 250, 250)"/><rect x="24" y="0" width="6" height="6" fill="rgb(233, 228, 224)"/><rect x="30" y="0" width="6" height="6" fill="rgb(251, 246, 242)"/><rect x="36" y="0" width="6" height="6" fill="rgb(228, 228, 228)"/><rect x="42" y="0" width="6" height="6" fill="rgb(249, 249, 249)"/><rect x="48" y="0" width="6" height="6" fill="rgb(250, 250, 250)"/><rect x="54" y="0" width="6" height="6" fill="rgb(248, 248, 248)"/><rect x="60" y="0" width="6" height="6" fill="rgb(231, 231, 231)"/><rect x="66" y="0" width="6" height="6" fill="rgb(248, 251, 255)"/><rect x="72" y="0" width="6" height="6" fill="rgb(224, 220, 222)"/><rect x="78" y="0" width="6" height="6" fill="rgb(249, 244, 240)"/><rect x="84" y="0" width="6" height="6" fill="rgb(250, 250, 250)"/><rect x="90" y="0" width="6" height="6" fill="rgb(250, 250, 250)"/><rect x="96" y="0" width="6" height="6" fill="rgb(250, 246, 248)"/><rect x="102" y="0" width="6" height="6" fill="rgb(221, 221, 221)"/><rect x="0" y="6" width="6" height="6" fill="rgb(226, 229, 235)"/><rect x="6" y="6" width="6" height="6" fill="rgb(205, 200, 196)"/><rect x="12" y="6" width="6" height="6" fill="rgb(213, 213, 213)"/><rect x="18" y="6" width="6" height="6" fill="rgb(213, 208, 204)"/><rect x="24" y="6" width="6" height="6" fill="rgb(214, 217, 223)"/><rect x="30" y="6" width="6" height="6" fill="rgb(201, 196, 192)"/><rect x="36" y="6" width="6" height="6" fill="rgb(213, 216, 222)"/><rect x="42" y="6" width="6" height="6" fill="rgb(211, 214, 220)"/><rect x="48" y="6" width="6" height="6" fill="rgb(230, 233, 239)"/><rect x="54" y="6" width="6" height="6" fill="rgb(219, 219, 219)"/><rect x="60" y="6" width="6" height="6" fill="rgb(217, 217, 217)"/><rect x="66" y="6" width="6" height="6" fill="rgb(218, 221, 227)"/><rect x="72" y="6" width="6" height="6" fill="rgb(231, 231, 231)"/><rect x="78" y="6" width="6" height="6" fill="rgb(226, 221, 217)"/><rect x="84" y="6" width="6" height="6" fill="rgb(200, 196, 198)"/><rect x="90" y="6" width="6" height="6" fill="rgb(219, 214, 210)"/><rect x="96" y="6" width="6" height="6" fill="rgb(214, 209, 205)"/><rect x="102" y="6" width="6" height="6" fill="rgb(217, 217, 217)"/><rect x="0" y="12" width="6" height="6" fill="rgb(223, 223, 223)"/><rect x="6" y="12" width="6" height="6" fill="rgb(255, 251, 253)"/><rect x="12" y="12" width="6" height="6" fill="rgb(250, 250, 250)"/><rect x="18" y="12" width="6" height="6" fill="rgb(250, 250, 250)"/><rect x="24" y="12" width="6" height="6" fill="rgb(255, 251, 253)"/><rect x="30" y="12" width="6" height="6" fill="rgb(239, 234, 230)"/><rect x="36" y="12" width="6" height="6" fill="rgb(253, 249, 251)"/><rect x="42" y="12" width="6" height="6" fill="rgb(253, 249, 251)"/><rect x="48" y="12" width="6" height="6" fill="rgb(252, 252, 252)"/><rect x="54" y="12" width="6" height="6" fill="rgb(246, 249, 255)"/><rect x="60" y="12" width="6" height="6" fill="rgb(253, 249, 251)"/><rect x="66" y="12" width="6" height="6" fill="rgb(234, 237, 243)"/><rect x="72" y="12" width="6" height="6" fill="rgb(253, 249, 251)"/><rect x="78" y="12" width="6" height="6" fill="rgb(250, 250, 250)"/><rect x="84" y="12" width="6" height="6" fill="rgb(255, 250, 246)"/><rect x="90" y="12" width="6" height="6" fill="rgb(255, 252, 248)"/><rect x="96" y="12" width="6" height="6" fill="rgb(248, 251, 255)"/><rect x="102" y="12" width="6" height="6" fill="rgb(253, 249, 251)"/></svg>
<svg style="position:absolute;left:560px;top:620px;filter:blur(0.7px)" width="78" height="18" shape-rendering="crispEdges"><rect x="0" y="0" width="6" height="6" fill="rgb(242, 242, 242)"/><rect x="6" y="0" width="6" height="6" fill="rgb(247, 242, 238)"/><rect x="12" y="0" width="6" height="6" fill="rgb(241, 237, 239)"/><rect x="18" y="0" width="6" height="6" fill="rgb(255, 250, 246)"/><rect x="24" y="0" width="6" height="6" fill="rgb(235, 231, 233)"/><rect x="30" y="0" width="6" height="6" fill="rgb(250, 250, 250)"/><rect x="36" y="0" width="6" height="6" fill="rgb(244, 244, 244)"/><rect x="42" y="0" width="6" height="6" fill="rgb(225, 221, 223)"/><rect x="48" y="0" width="6" height="6" fill="rgb(246, 249, 255)"/><rect x="54" y="0" width="6" height="6" fill="rgb(226, 229, 235)"/><rect x="60" y="0" width="6" height="6" fill="rgb(252, 252, 252)"/><rect x="66" y="0" width="6" height="6" fill="rgb(252, 252, 252)"/><rect x="72" y="0" width="6" height="6" fill="rgb(236, 232, 234)"/><rect x="0" y="6" width="6" height="6" fill="rgb(217, 220, 226)"/><rect x="6" y="6" width="6" height="6" fill="rgb(197, 200, 206)"/><rect x="12" y="6" width="6" height="6" fill="rgb(210, 205, 201)"/><rect x="18" y="6" width="6" height="6" fill="rgb(205, 205, 205)"/><rect x="24" y="6" width="6" height="6" fill="rgb(226, 226, 226)"/><rect x="30" y="6" width="6" height="6" fill="rgb(209, 212, 218)"/><rect x="36" y="6" width="6" height="6" fill="rgb(199, 199, 199)"/><rect x="42" y="6" width="6" height="6" fill="rgb(202, 197, 193)"/><rect x="48" y="6" width="6" height="6" fill="rgb(222, 225, 231)"/><rect x="54" y="6" width="6" height="6" fill="rgb(221, 217, 219)"/><rect x="60" y="6" width="6" height="6" fill="rgb(230, 230, 230)"/><rect x="66" y="6" width="6" height="6" fill="rgb(229, 229, 229)"/><rect x="72" y="6" width="6" height="6" fill="rgb(229, 229, 229)"/><rect x="0" y="12" width="6" height="6" fill="rgb(240, 240, 240)"/><rect x="6" y="12" width="6" height="6" fill="rgb(246, 249, 255)"/><rect x="12" y="12" width="6" height="6" fill="rgb(227, 222, 218)"/><rect x="18" y="12" width="6" height="6" fill="rgb(250, 250, 250)"/><rect x="24" y="12" width="6" height="6" fill="rgb(253, 249, 251)"/><rect x="30" y="12" width="6" height="6" fill="rgb(237, 237, 237)"/><rect x="36" y="12" width="6" height="6" fill="rgb(223, 219, 221)"/><rect x="42" y="12" width="6" height="6" fill="rgb(223, 219, 221)"/><rect x="48" y="12" width="6" height="6" fill="rgb(232, 227, 223)"/><rect x="54" y="12" width="6" height="6" fill="rgb(233, 233, 233)"/><rect x="60" y="12" width="6" height="6" fill="rgb(246, 249, 255)"/><rect x="66" y="12" width="6" height="6" fill="rgb(232, 227, 223)"/><rect x="72" y="12" width="6" height="6" fill="rgb(237, 233, 235)"/></svg>
<div style="position:absolute;left:8px;top:660px;width:1256px;height:21px;background:linear-gradient(rgba(0,0,0,0),rgba(0,0,0,.05))"></div>
<div style="position:absolute;left:1238px;top:495px;width:26px;height:186px;background:linear-gradient(90deg,rgba(0,0,0,0),rgba(0,0,0,.06))"></div>
<div style="position:absolute;left:1200px;top:190px;width:63px;height:27px;background:linear-gradient(90deg,rgba(0,0,0,0),rgba(0,0,0,.045))"></div>
<div style="position:absolute;left:893px;top:230px;width:33px;height:27px;background:linear-gradient(90deg,rgba(0,0,0,0),rgba(0,0,0,.05))"></div>
<div style="position:absolute;left:669px;top:484px;width:200px;height:68px;border:4px solid #ff0000;box-sizing:border-box;box-shadow:inset 3px 3px 5px rgba(0,0,0,.5),2px 2px 3px rgba(0,0,0,.45)"></div>
<div style="position:absolute;left:833px;top:492.8px;width:29.2px;height:29.2px;border-radius:50%;background:#f00"></div>
<div style="position:absolute;left:842.90px;top:496px;font:400 17.44px/23px 'Liberation Sans';color:#fff;white-space:nowrap;transform-origin:left top;transform:scaleX(0.9111);">2</div>
</body></html>
